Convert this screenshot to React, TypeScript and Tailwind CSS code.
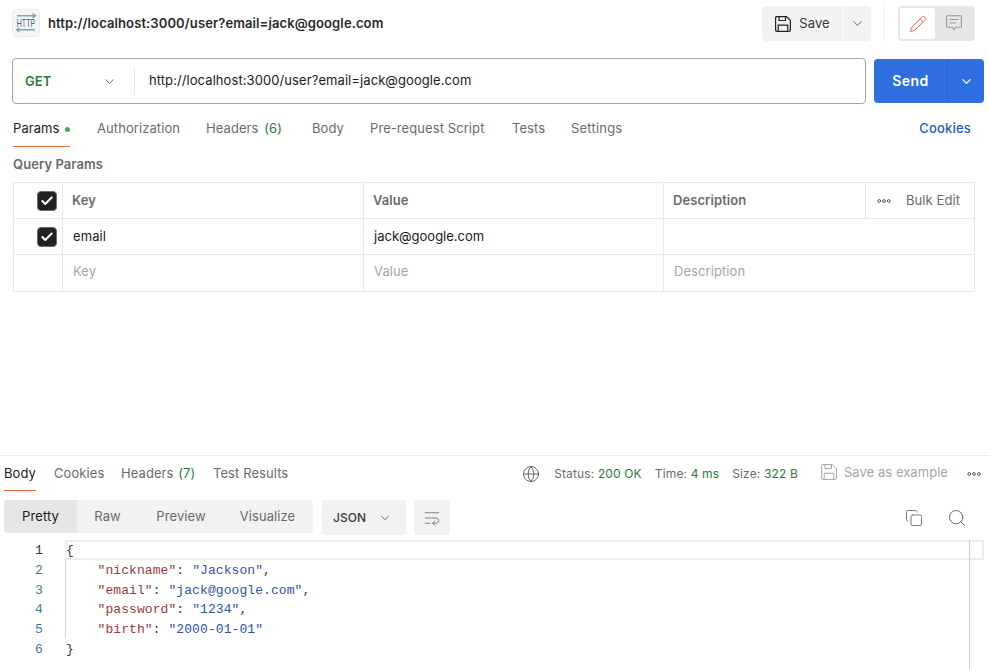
import React from "react";
import { ChevronDown, Globe, Copy, Search, Pencil, WrapText, Check } from "lucide-react";

const Box = () => (
  <span className="flex h-[20px] w-[20px] items-center justify-center rounded-[4px] border border-[#6b6b6b] bg-[#212121]">
    <Check size={14} strokeWidth={3.5} className="text-white" />
  </span>
);

const HttpIcon = () => (
  <svg width="28" height="28" viewBox="0 0 28 28" fill="none">
    <rect x="0.5" y="0.5" width="27" height="27" rx="4" fill="#f6f6f6" stroke="#ebebeb" />
    <path d="M5 6.8H23M20.5 4.5L23.5 6.8L20.5 9" stroke="#7aa9b3" strokeWidth="1.5" />
    <path d="M5 20.8H23M7.5 18.8L4.5 20.8L7.5 23" stroke="#7aa9b3" strokeWidth="1.5" />
    <text transform="translate(14 17.5) scale(0.7 1)" textAnchor="middle" fontSize="10" fontFamily="Liberation Sans" fill="#2c6a80">HTTP</text>
  </svg>
);

const Floppy = ({ color, w = 1.2 }: { color: string; w?: number }) => (
  <svg width="16" height="16" viewBox="0 0 16 16" fill="none" stroke={color} strokeWidth={w}>
    <path d="M1.5 0.6H11.5L15.4 4.5V14C15.4 14.8 14.8 15.4 14 15.4H2C1.2 15.4 0.6 14.8 0.6 14V1.5C0.6 1 1 0.6 1.5 0.6Z" />
    <path d="M4 0.8V4.5H10.5V0.8" />
    <path d="M3.2 15.2V9.2H12.8V15.2" />
  </svg>
);

const Comment = () => (
  <svg width="16" height="17" viewBox="0 0 16 17" fill="none" stroke="#9a9a9a" strokeWidth="1.1">
    <path d="M1.2 0.8H14.8C15.1 0.8 15.4 1.1 15.4 1.4V11.6C15.4 11.9 15.1 12.2 14.8 12.2H9.6L8 14.6L6.4 12.2H1.2C0.9 12.2 0.6 11.9 0.6 11.6V1.4C0.6 1.1 0.9 0.8 1.2 0.8Z" />
    <path d="M3.5 4.5H12.5M3.5 8H10" />
  </svg>
);

const Dots = () => (
  <svg width="14" height="6" viewBox="0 0 14 6" fill="none" stroke="#5a5a5a" strokeWidth="1">
    <circle cx="2.2" cy="3" r="1.4" />
    <circle cx="7" cy="3" r="1.4" />
    <circle cx="11.8" cy="3" r="1.4" />
  </svg>
);

const Tab = ({ children, active, className = "" }: { children: React.ReactNode; active?: boolean; className?: string }) => (
  <span className={`relative whitespace-nowrap ${active ? "text-[#212121]" : "text-[#6b6b6b]"} ${className}`}>{children}</span>
);

const K = ({ c }: { c: string }) => <span className="text-[#9c3a3a]">{c}</span>;
const V = ({ c }: { c: string }) => <span className="text-[#2f55a4]">{c}</span>;
const P = ({ c }: { c: string }) => <span className="text-[#3a3a3a]">{c}</span>;

export default function App() {
  return (
    <div className="h-[669px] w-[989px] overflow-hidden bg-white text-[13px] tracking-[0.08px] text-[#212121]" style={{ fontFamily: "Inter, sans-serif" }}>
      {/* header */}
      <div className="flex h-[48px] items-start pt-[6px] pl-[12px] pr-[14px]">
        <div className="mt-[3px] h-[28px] w-[28px]"><HttpIcon /></div>
        <span className="ml-[8px] mt-[9px] text-[13px] font-semibold leading-[16px] tracking-[0.11px] text-[#2a2a2a]">http://localhost:3000/user?email=jack@google.com</span>
        <div className="ml-auto flex h-[35px] items-center">
          <div className="flex h-[35px] w-[81px] items-center justify-center gap-[8px] rounded-l-[4px] bg-[#f2f2f2] text-[#3a3a3a]">
            <Floppy color="#212121" />
            <span>Save</span>
          </div>
          <div className="ml-[1px] flex h-[35px] w-[27px] items-center justify-center rounded-r-[4px] bg-[#f2f2f2]">
            <ChevronDown size={15} strokeWidth={1.4} className="text-[#555]" />
          </div>
          <div className="ml-[13px] h-[35px] w-px bg-[#ededed]" />
          <div className="ml-[13px] flex h-[35px] w-[77px] items-center rounded-[4px] bg-[#e6e6e6] p-[2px]">
            <div className="flex h-[31px] w-[35px] items-center justify-center rounded-[3px] bg-white">
              <Pencil size={18} strokeWidth={1.3} className="text-[#f26b3a]" />
            </div>
            <div className="flex flex-1 items-center justify-center">
              <Comment />
            </div>
          </div>
        </div>
      </div>

      {/* url bar */}
      <div className="mt-[10px] flex h-[46px] pl-[12px] pr-[5px]">
        <div className="flex h-[46px] w-[854px] items-center rounded-[4px] border border-[#a6a6a6]">
          <div className="flex h-[28px] w-[122px] items-center justify-between border-r border-[#e6e6e6] pl-[12px] pr-[17px]">
            <span className="font-semibold leading-none text-[#2f7a3b]">GET</span>
            <ChevronDown size={15} strokeWidth={1.4} className="text-[#555]" />
          </div>
          <span className="ml-[14px] text-[#212121]">http://localhost:3000/user?email=jack@google.com</span>
        </div>
        <div className="ml-[8px] mt-px flex h-[44px] w-[110px] rounded-[4px] bg-[#2f6fe0] text-white">
          <div className="flex w-[74px] items-center justify-center border-r border-[#2a62c6] pb-px text-[14px] font-semibold tracking-[0.4px]">Send</div>
          <div className="flex flex-1 items-center justify-center"><ChevronDown size={15} strokeWidth={2} /></div>
        </div>
      </div>

      {/* request tabs */}
      <div className="relative mt-[14px] flex h-[20px] items-center px-[13px] leading-[20px]">
        <Tab active className="w-[84px]">
          Params<span className="ml-[5px] inline-block h-[5px] w-[5px] rounded-full bg-[#3fae5a] align-middle" />
        </Tab>
        <Tab className="w-[109px]">Authorization</Tab>
        <Tab className="w-[106px]">Headers <span className="ml-[2px] text-[#2f7a3b]">(6)</span></Tab>
        <Tab className="w-[58px]">Body</Tab>
        <Tab className="w-[142px]">Pre-request Script</Tab>
        <Tab className="w-[59px]">Tests</Tab>
        <Tab className="tracking-[0.2px]">Settings</Tab>
        <span className="ml-auto mr-[5px] font-medium tracking-[0.2px] text-[#2a5bc9]">Cookies</span>
        <span className="absolute left-[13px] top-[28px] h-px w-[57px] bg-[#f26b3a]" />
      </div>

      <div className="mt-[18px] px-[13px] font-semibold leading-[16px] text-[#6b6b6b]">Query Params</div>

      {/* table */}
      <div className="ml-[13px] mt-[10px] w-[962px] border border-[#e8e8e8]">
        <div className="flex h-[36px] border-b border-[#e8e8e8]">
          <div className="flex w-[49px] items-center justify-end border-r border-[#e8e8e8] pr-[5px]"><Box /></div>
          <div className="flex w-[301px] items-center border-r border-[#e8e8e8] pl-[9px] font-semibold text-[#6b6b6b]">Key</div>
          <div className="flex w-[300px] items-center border-r border-[#e8e8e8] pl-[9px] font-semibold text-[#6b6b6b]">Value</div>
          <div className="flex w-[202px] items-center border-r border-[#e8e8e8] pl-[9px] font-semibold text-[#6b6b6b]">Description</div>
          <div className="flex flex-1 items-center justify-between pl-[11px] pr-[14px] text-[#6b6b6b]">
            <Dots />
            <span>Bulk Edit</span>
          </div>
        </div>
        <div className="flex h-[36px] border-b border-[#e8e8e8]">
          <div className="flex w-[49px] items-center justify-end border-r border-[#e8e8e8] pr-[5px]"><Box /></div>
          <div className="flex w-[301px] items-center border-r border-[#e8e8e8] pl-[10px]">email</div>
          <div className="flex w-[300px] items-center border-r border-[#e8e8e8] pl-[10px] tracking-normal">jack@google.com</div>
          <div className="flex-1" />
        </div>
        <div className="flex h-[36px] text-[#a6a6a6]">
          <div className="w-[49px] border-r border-[#e8e8e8]" />
          <div className="flex w-[301px] items-center border-r border-[#e8e8e8] pb-[2px] pl-[10px]">Key</div>
          <div className="flex w-[300px] items-center border-r border-[#e8e8e8] pb-[2px] pl-[10px]">Value</div>
          <div className="flex flex-1 items-center pb-[2px] pl-[10px]">Description</div>
        </div>
      </div>

      {/* response */}
      <div className="mt-[163px] h-px bg-[#ededed]" />
      <div className="relative mt-[7px] flex h-[20px] items-center px-[4px] leading-[20px]">
        <Tab active className="w-[50px]">Body</Tab>
        <Tab className="w-[67px]">Cookies</Tab>
        <Tab className="w-[92px]">Headers <span className="ml-[1px] text-[#2f7a3b]">(7)</span></Tab>
        <Tab>Test Results</Tab>
        <span className="absolute left-[4px] top-[27px] h-px w-[32px] bg-[#f26b3a]" />
        <div className="ml-auto flex items-center pt-[2px] text-[12px] tracking-[0.14px] text-[#6b6b6b]">
          <Globe size={18} strokeWidth={1.1} className="mr-[14px] text-[#4a4a4a]" />
          <span>Status: <span className="text-[#2f7a3b]">200 OK</span></span>
          <span className="ml-[13px]">Time: <span className="text-[#2f7a3b]">4 ms</span></span>
          <span className="ml-[13px]">Size: <span className="text-[#2f7a3b]">322 B</span></span>
          <span className="mb-[4px] ml-[23px]"><Floppy color="#a6a6a6" w={1} /></span>
          <span className="mb-[4px] ml-[7px] text-[13px] tracking-[0.05px] text-[#a6a6a6]">Save as example</span>
          <span className="ml-[19px] mr-[4px] flex"><Dots /></span>
        </div>
      </div>

      <div className="mt-[17px] flex h-[35px] items-start pl-[4px] pr-[22px]">
        <div className="flex h-[33px] w-[309px] rounded-[4px] bg-[#f2f2f2] text-[#6b6b6b]">
          <div className="flex w-[73px] items-center justify-center rounded-l-[4px] bg-[#e6e6e6] text-[#212121]">Pretty</div>
          <div className="flex w-[61px] items-center justify-center">Raw</div>
          <div className="flex w-[86px] items-center justify-center">Preview</div>
          <div className="flex w-[89px] items-center justify-center pr-[2px]">Visualize</div>
        </div>
        <div className="ml-[9px] flex h-[35px] w-[84px] items-center justify-between rounded-[4px] bg-[#f2f2f2] pl-[11px] pr-[14px] text-[12px] font-medium text-[#3a3a3a]">
          <span>JSON</span>
          <ChevronDown size={14} strokeWidth={1.4} className="text-[#555]" />
        </div>
        <div className="ml-[8px] flex h-[35px] w-[36px] items-center justify-center rounded-[4px] bg-[#f2f2f2]">
          <WrapText size={18} strokeWidth={1.1} className="text-[#6b6b6b]" />
        </div>
        <div className="ml-auto flex h-[35px] items-center gap-[24px] text-[#6b6b6b]">
          <Copy size={18} strokeWidth={1.2} />
          <Search size={20} strokeWidth={1.2} />
        </div>
      </div>

      {/* code */}
      <div className="relative mt-[5px] flex pt-px text-[13px] leading-[19.8px] tracking-[0.08px]" style={{ fontFamily: '"Liberation Mono", monospace' }}>
        <div className="w-[43px] text-right text-[#47798c]">
          <div className="text-[#24305e]">1</div>
          <div>2</div><div>3</div><div>4</div><div>5</div><div>6</div>
        </div>
        <div className="relative ml-[22px] flex-1 whitespace-pre pl-px">
          <div className="absolute left-0 right-[5px] -top-px h-[20px] border-2 border-[#ededed]" />
          <div className="absolute left-0 top-[19px] h-[79px] w-px bg-[#d4d4d4]" />
          <div className="text-[#3a3a3a]">{"{"}</div>
          <div>{"    "}<K c={'"nickname"'} /><P c=": " /><V c={'"Jackson"'} /><P c="," /></div>
          <div>{"    "}<K c={'"email"'} /><P c=": " /><V c={'"jack@google.com"'} /><P c="," /></div>
          <div>{"    "}<K c={'"password"'} /><P c=": " /><V c={'"1234"'} /><P c="," /></div>
          <div>{"    "}<K c={'"birth"'} /><P c=": " /><V c={'"2000-01-01"'} /></div>
          <div className="text-[#3a3a3a]">{"}"}</div>
        </div>
        <div className="absolute left-[969px] top-0 h-[130px] w-px bg-[#d0d0d0]" />
      </div>
    </div>
  );
}
